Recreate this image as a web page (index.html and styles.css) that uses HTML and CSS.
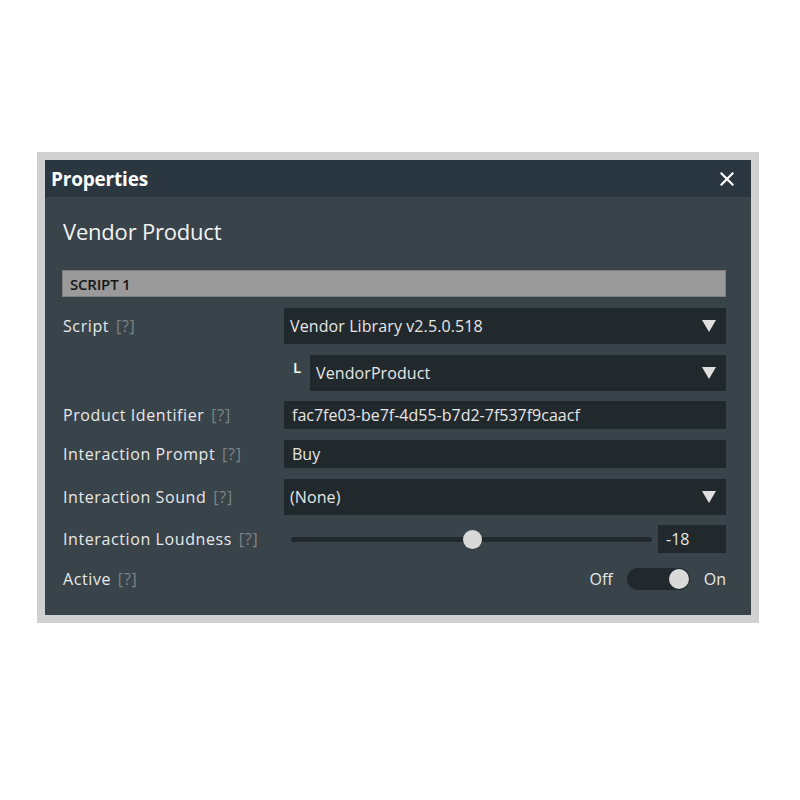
FILE: index.html
```html
<!DOCTYPE html>
<html>
<head>
<meta charset="utf-8">
<link rel="stylesheet" href="styles.css">
</head>
<body>
<div class="window">
  <div class="titlebar">
    <span class="title">Properties</span>
    <svg class="close" width="14" height="14" viewBox="0 0 14 14"><path d="M1.5 1.5 L12.5 12.5 M12.5 1.5 L1.5 12.5" stroke="#ffffff" stroke-width="2.2" stroke-linecap="square"/></svg>
  </div>
  <div class="content">
    <h1 class="heading">Vendor Product</h1>
    <div class="section">SCRIPT 1</div>
    <div class="rows">
      <div class="row row-tall">
        <div class="label">Script <span class="help">[?]</span></div>
        <div class="select"><span>Vendor Library v2.5.0.518</span><svg class="caret" width="14" height="12" viewBox="0 0 14 12"><path d="M0 0 H14 L7 12 Z" fill="#e0e0e0"/></svg></div>
      </div>
      <div class="row row-tall">
        <div class="label"></div>
        <div class="sub">
          <span class="sub-mark">L</span>
          <div class="select"><span>VendorProduct</span><svg class="caret" width="14" height="12" viewBox="0 0 14 12"><path d="M0 0 H14 L7 12 Z" fill="#e0e0e0"/></svg></div>
        </div>
      </div>
      <div class="row row-short tight">
        <div class="label">Product Identifier <span class="help">[?]</span></div>
        <div class="input">fac7fe03-be7f-4d55-b7d2-7f537f9caacf</div>
      </div>
      <div class="row row-short">
        <div class="label">Interaction Prompt <span class="help">[?]</span></div>
        <div class="input">Buy</div>
      </div>
      <div class="row row-tall">
        <div class="label">Interaction Sound <span class="help">[?]</span></div>
        <div class="select"><span>(None)</span><svg class="caret" width="14" height="12" viewBox="0 0 14 12"><path d="M0 0 H14 L7 12 Z" fill="#e0e0e0"/></svg></div>
      </div>
      <div class="row row-short tight">
        <div class="label">Interaction Loudness <span class="help">[?]</span></div>
        <div class="slider-wrap">
          <div class="slider">
            <div class="track"></div>
            <div class="thumb" style="left: 50%"></div>
          </div>
          <div class="number">-18</div>
        </div>
      </div>
      <div class="row row-toggle">
        <div class="label">Active <span class="help">[?]</span></div>
        <div class="toggle-wrap">
          <span class="toggle-text">Off</span>
          <div class="toggle"><div class="knob"></div></div>
          <span class="toggle-text">On</span>
        </div>
      </div>
    </div>
  </div>
</div>
</body>
</html>
```
FILE: styles.css
```css
* { box-sizing: border-box; }
html, body { margin: 0; padding: 0; background: #ffffff; }
body {
  font-family: "Open Sans", "Noto Sans", sans-serif;
  padding-top: 152px;
  padding-left: 37px;
}
.window {
  width: 722px;
  border: 8px solid #d0d0d0;
  background: #39434a;
}
.titlebar {
  height: 37px;
  background: #2b3740;
  display: flex;
  align-items: center;
  justify-content: space-between;
  padding: 0 17px 0 6px;
}
.title {
  color: #ffffff;
  font-weight: 700;
  font-size: 19px;
  letter-spacing: -0.2px;
}
.close { display: block; }
.content {
  padding: 18px 25px 25px 17px;
}
.heading {
  margin: 0 0 23px 1px;
  font-weight: 400;
  font-size: 22px;
  line-height: 32px;
  color: #f2f2f2;
  letter-spacing: -0.2px;
}
.section {
  height: 27px;
  background: #9a9a9a;
  border: 1px solid #7e7e7e;
  color: #151515;
  font-size: 15px;
  font-weight: 600;
  padding-left: 7px;
  display: flex;
  align-items: center;
  letter-spacing: -0.2px;
}
.rows {
  margin-top: 11px;
  display: flex;
  flex-direction: column;
  gap: 11px;
}
.row {
  display: grid;
  grid-template-columns: 222px 1fr;
  align-items: center;
}
.row-tall { height: 36px; }
.row-short { height: 28px; }
.row-toggle { height: 22px; margin-top: 4px; }
.tight { margin-top: -1px; }
.label {
  padding-left: 1px;
  color: #e8e8e8;
  font-size: 16px;
  letter-spacing: 0.6px;
}
.help { color: #7b8386; letter-spacing: 0.8px; margin-left: 2px; }
.select {
  height: 36px;
  background: #22292d;
  display: flex;
  align-items: center;
  justify-content: space-between;
  padding: 0 10px 0 6px;
  color: #e6e6e6;
  font-size: 16px;
  letter-spacing: 0.1px;
}
.caret { display: block; }
.sub {
  display: flex;
  align-items: center;
  height: 36px;
}
.sub-mark {
  width: 26px;
  padding-left: 9px;
  color: #ffffff;
  font-size: 15px;
  font-weight: 600;
  line-height: 18px;
  align-self: flex-start;
  margin-top: 3px;
}
.sub .select { flex: 1; }
.input {
  height: 28px;
  background: #22292d;
  display: flex;
  align-items: center;
  padding-left: 8px;
  color: #e6e6e6;
  font-size: 16px;
}
.slider-wrap {
  display: flex;
  align-items: center;
  gap: 6px;
  height: 28px;
}
.slider {
  position: relative;
  flex: 1;
  height: 28px;
  margin-left: 7px;
}
.track {
  position: absolute;
  left: 0; right: 0;
  top: 12px;
  height: 5px;
  border-radius: 3px;
  background: #22292d;
}
.thumb {
  position: absolute;
  top: 5px;
  width: 19px;
  height: 19px;
  margin-left: -9px;
  border-radius: 50%;
  background: #d9d9d9;
}
.number {
  width: 68px;
  height: 28px;
  background: #22292d;
  color: #e6e6e6;
  font-size: 16px;
  display: flex;
  align-items: center;
  padding-left: 8px;
}
.toggle-wrap {
  display: flex;
  justify-content: flex-end;
  align-items: center;
  gap: 14px;
}
.toggle-text {
  color: #e8e8e8;
  font-size: 16px;
}
.toggle {
  width: 63px;
  height: 22px;
  border-radius: 11px;
  background: #22292d;
  display: flex;
  justify-content: flex-end;
  align-items: center;
  padding-right: 1px;
}
.knob {
  width: 20px;
  height: 20px;
  border-radius: 50%;
  background: #d9d9d9;
}
```
